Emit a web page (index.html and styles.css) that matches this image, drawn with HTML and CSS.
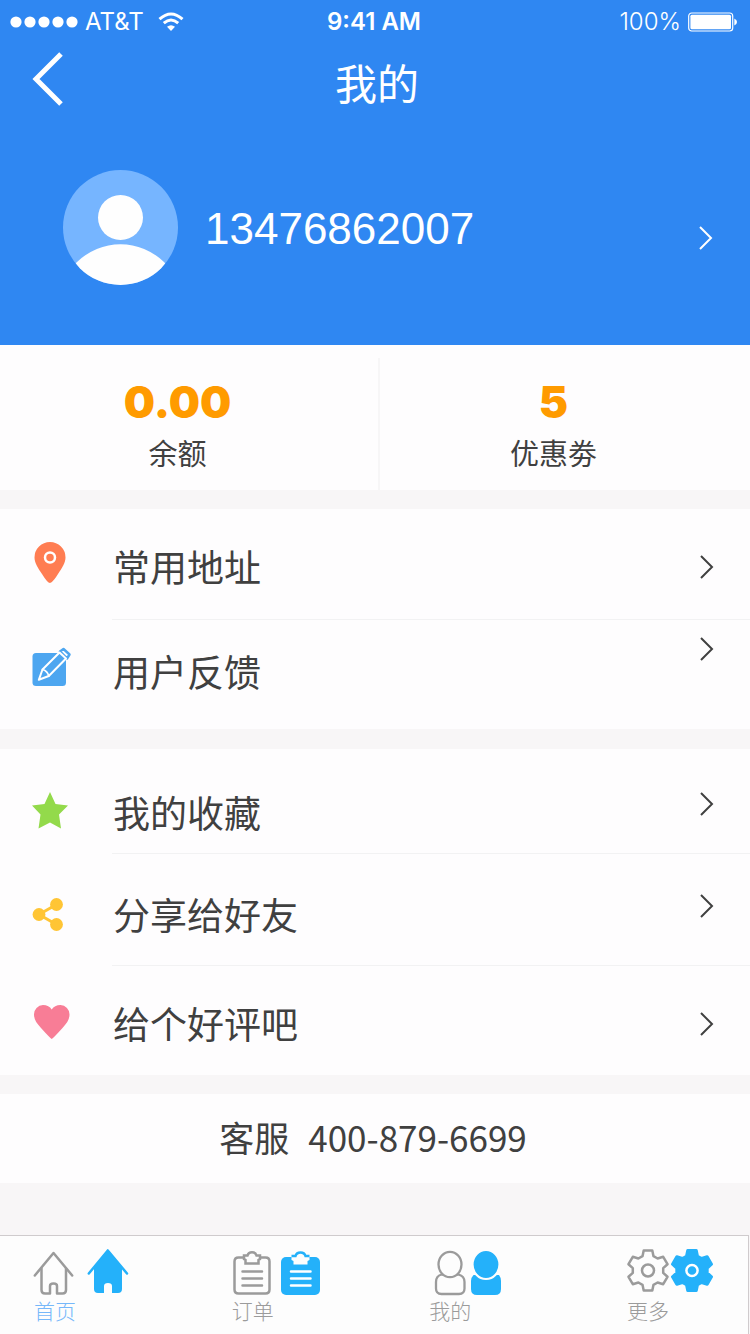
FILE: index.html
```html
<!DOCTYPE html>
<html lang="zh-CN">
<head>
<meta charset="utf-8">
<meta name="viewport" content="width=device-width, initial-scale=1">
<title>我的</title>
<link rel="stylesheet" href="styles.css">
</head>
<body>
<svg class="defs" aria-hidden="true">
  <symbol id="chevron" viewBox="0 0 16 26"><path d="M2 2 13 13 2 24" fill="none" stroke="currentColor" stroke-width="2"/></symbol>
  <symbol id="gear" viewBox="-22 -22 44 44" overflow="visible"><path d="M-4.300-20H4.300L5.500-14.300 9.600-12 15.200-13.700 19.500-6.300 15.200-2.400V2.400L19.500 6.300 15.200 13.700 9.600 12 5.500 14.300 4.300 20H-4.300L-5.500 14.300-9.600 12-15.200 13.700-19.500 6.300-15.200 2.400V-2.400L-19.500-6.300-15.200-13.700-9.600-12-5.500-14.300Z" stroke-linejoin="round"/></symbol>
</svg>
<div class="app">
  <header class="header">
    <div class="status">
      <div class="status__side">
        <svg class="status__dots" width="68" height="12" viewBox="0 0 68 12" fill="#fff"><circle cx="6" cy="6" r="5.6"/><circle cx="20" cy="6" r="5.6"/><circle cx="34" cy="6" r="5.6"/><circle cx="48" cy="6" r="5.6"/><circle cx="62" cy="6" r="5.6"/></svg>
        <span class="status__carrier">AT&amp;T</span>
        <svg class="status__wifi" width="26" height="20" viewBox="0 0 26 20" fill="none" stroke="#fff" stroke-width="3"><path d="M1.5 7.2Q13-3.200 24.500 7.200M5.800 11.200Q13 4.900 20.200 11.200"/><path d="M13 19 9 14.800Q13 11.500 17 14.800Z" fill="#fff" stroke="none"/></svg>
      </div>
      <strong class="status__time">9:41 AM</strong>
      <div class="status__side status__side--end">
        <span>100%</span>
        <svg width="50" height="20" viewBox="0 0 50 20"><rect x=".7" y="1" width="44" height="18" rx="3" fill="none" stroke="#fff" stroke-width="1.200"/><rect x="2.400" y="2.700" width="40.600" height="14.600" rx="1.500" fill="#fff"/><path d="M46.300 6.500Q49 7.500 49 10T46.300 13.500Z" fill="#fff"/></svg>
      </div>
    </div>
    <nav class="nav">
      <button class="nav__back" type="button" aria-label="返回"><svg width="32" height="54" viewBox="0 0 32 54"><path d="M29 2 4 27 29 52" fill="none" stroke="#fff" stroke-width="5"/></svg></button>
      <h1 class="nav__title">我的</h1>
    </nav>
    <a class="profile" href="#profile">
      <svg class="profile__avatar" width="115" height="115" viewBox="0 0 115 115"><clipPath id="disc"><circle cx="57.500" cy="57.500" r="57.500"/></clipPath><g clip-path="url(#disc)"><rect width="115" height="115" fill="#76b5ff"/><circle cx="57.500" cy="136" r="61.800" fill="#fefefe"/></g><circle cx="57.500" cy="47.500" r="22.500" fill="#fefefe"/></svg>
      <span class="profile__phone">13476862007</span>
      <svg class="profile__arrow" width="16" height="26"><use href="#chevron"/></svg>
    </a>
  </header>

  <section class="stats">
    <a class="stat" href="#balance"><strong class="stat__value">0.00</strong><span class="stat__label">余额</span></a>
    <a class="stat" href="#coupons"><strong class="stat__value">5</strong><span class="stat__label">优惠劵</span></a>
  </section>

  <ul class="menu">
    <li><a class="row row--address" href="#address">
      <svg class="row__icon" width="42" height="50" viewBox="0 0 42 50"><path d="M20 41Q17.500 41 12 32C8 26 4.500 21 4.500 15.500A15.500 15.500 0 0 1 35.500 15.500C35.500 21 32 26 28 32 22.500 41 20 41 20 41Z" fill="#ff7d52"/><circle cx="20" cy="15.500" r="5" fill="none" stroke="#fff" stroke-width="2.500"/></svg>
      <span class="row__label">常用地址</span><svg class="row__arrow" width="16" height="26"><use href="#chevron"/></svg></a></li>
    <li><a class="row row--feedback" href="#feedback">
      <svg class="row__icon" width="42" height="50" viewBox="0 0 42 50"><rect x="2.500" y="6" width="33.500" height="33" rx="3.500" fill="#4da6f0"/><g stroke-linejoin="round" stroke-linecap="round"><path d="M30 4.500 33.500 2 39.500 7.500 37 11.500Z" fill="#fff" stroke="#4da6f0" stroke-width="2.500"/><path d="M29.500 5.500 12.500 22.500 8.800 32.800 18.800 29 36 11.500Z" fill="#4da6f0" stroke="#fff" stroke-width="2"/><path d="M12.500 22.500Q17.500 24 18.800 29" fill="none" stroke="#fff" stroke-width="1.800"/></g></svg>
      <span class="row__label">用户反馈</span><svg class="row__arrow row__arrow--top" width="16" height="26"><use href="#chevron"/></svg></a></li>
  </ul>

  <ul class="menu">
    <li><a class="row row--favorites" href="#favorites">
      <svg class="row__icon" width="42" height="50" viewBox="0 0 42 50"><path d="M20 4 25.500 16 38 17.500 29 26.500 31 40.500 20 34.500 8.500 40.500 10.500 26.500 2 17.500 14.500 16Z" fill="#93da4b"/></svg>
      <span class="row__label">我的收藏</span><svg class="row__arrow row__arrow--high" width="16" height="26"><use href="#chevron"/></svg></a></li>
    <li><a class="row row--share" href="#share">
      <svg class="row__icon" width="42" height="50" viewBox="0 0 42 50"><path d="M26.500 14.500 9 24.500 26.500 34.500" fill="none" stroke="#ffc535" stroke-width="3"/><g fill="#ffc535"><circle cx="26.500" cy="14.500" r="6.400"/><circle cx="9" cy="24.500" r="6.400"/><circle cx="26.500" cy="34.500" r="6.400"/></g></svg>
      <span class="row__label">分享给好友</span><svg class="row__arrow row__arrow--high" width="16" height="26"><use href="#chevron"/></svg></a></li>
    <li><a class="row row--rate" href="#rate">
      <svg class="row__icon" width="42" height="50" viewBox="0 0 42 50"><path d="M21.700 40Q20.500 39.500 11 29C6.500 24 4 20.500 4 15.500A9.300 9.300 0 0 1 13 6Q19 6 21.700 10.500 24.500 6 30.500 6A9.300 9.300 0 0 1 39.500 15.500C39.500 20.500 37 24 32.500 29Q23 39.500 21.700 40Z" fill="#f87d96"/></svg>
      <span class="row__label">给个好评吧</span><svg class="row__arrow" width="16" height="26"><use href="#chevron"/></svg></a></li>
  </ul>

  <a class="service" href="tel:4008796699"><span>客服</span><span>400-879-6699</span></a>

  <nav class="tabs">
    <a class="tab tab--active" href="#home">
      <svg width="96" height="49" viewBox="0 0 96 49"><g fill="none" stroke="#9b9b9b" stroke-width="2.500" stroke-linecap="round" stroke-linejoin="round"><path d="M1.800 28.500 20.500 6 39.200 28.500"/><path d="M8.500 21.500V43Q8.500 46.500 12 46.500H17V39Q17 36.500 20.500 36.500T24 39V46.500H29.500Q33 46.500 33 43V21.500"/></g><path d="M74.800 3.500 55.800 26.500M74.800 3.500 94 26.500" fill="none" stroke="#24b1fa" stroke-width="2.500" stroke-linecap="round"/><path d="M74.800 2.500 89 20V42Q89 46 85 46H79V39Q79 36 75 36T71 39V46H65Q61 46 61 42V20Z" fill="#24b1fa"/></svg>
      <span class="tab__label">首页</span></a>
    <a class="tab" href="#orders">
      <svg width="96" height="49" viewBox="0 0 96 49"><g fill="none" stroke="#9b9b9b" stroke-width="2.500"><path d="M12 10.500H7.500Q3.500 10.500 3.500 14.500V42.500Q3.500 46.500 7.500 46.500H34.500Q38.500 46.500 38.500 42.500V14.500Q38.500 10.500 34.500 10.500H30"/><path d="M13 8.500H16.500Q17.500 5.200 21 5.200T25.500 8.500H29V12L27.500 13V16.500H14.500V13L13 12Z"/><path d="M11.500 24.500H31M11.500 31.500H31M11.500 38.500H31" stroke-linecap="round"/></g><rect x="50" y="10" width="39" height="38" rx="5" fill="#24b1fa"/><path d="M60.500 9H64.500Q65.500 5.500 69.500 5.500T74.500 9H78.500V13L76.500 14V17.500H62.500V14L60.500 13Z" fill="#fdfdfd"/><path d="M60.500 9H64.500Q65.500 5.500 69.500 5.500T74.500 9H78.500" fill="none" stroke="#24b1fa" stroke-width="2.500"/><path d="M60 24.500H79.500M60 31.500H79.500M60 38.500H79.500" stroke="#fff" stroke-width="2.500" stroke-linecap="round"/></svg>
      <span class="tab__label">订单</span></a>
    <a class="tab" href="#mine">
      <svg width="96" height="49" viewBox="0 0 96 49"><g stroke="#9b9b9b" stroke-width="2.300" fill="#fdfdfd"><path d="M13.500 27.500H30.500Q36.500 29 36.500 35V41.500Q36.500 47 31 47H13.500Q8 47 8 41.500V35Q8 29 13.500 27.500Z"/><ellipse cx="22" cy="17.500" rx="11.500" ry="12.700"/></g><path d="M45.500 28H71Q73 30.500 73 34V42Q73 48 67 48H49Q43 48 43 42V34Q43 30.500 45.500 28Z" fill="#24b1fa"/><ellipse cx="58" cy="17.500" rx="13.500" ry="14.500" fill="#24b1fa" stroke="#fdfdfd" stroke-width="2.200"/></svg>
      <span class="tab__label">我的</span></a>
    <a class="tab" href="#more">
      <svg width="96" height="49" viewBox="0 0 96 49"><g fill="none" stroke="#9b9b9b" stroke-width="2.500"><use href="#gear" x="0" y="1.500" width="44" height="44"/><circle cx="22" cy="23.500" r="6"/></g><g fill="#24b1fa" stroke="#24b1fa" stroke-width="3"><use href="#gear" x="44" y="1.500" width="44" height="44"/></g><circle cx="66" cy="23.500" r="5.600" fill="none" stroke="#fff" stroke-width="2.500"/></svg>
      <span class="tab__label">更多</span></a>
  </nav>
</div>
</body>
</html>
```
FILE: styles.css
```css
* { box-sizing: border-box; }

body {
  margin: 0;
  background: #f8f6f7;
  color: #404040;
  font-family: "Liberation Sans", "Noto Sans CJK SC", sans-serif;
}

a { color: inherit; text-decoration: none; }

.defs { display: block; width: 0; height: 0; }

.app {
  display: flex;
  flex-direction: column;
  min-height: 100vh;
}

.header {
  background: #2f87f2;
  color: #fff;
  padding-bottom: 60px;
}

.status {
  display: grid;
  grid-template-columns: 1fr auto 1fr;
  align-items: center;
  height: 43px;
  padding: 0 12px 0 10px;
  font: 300 24px/28px Inter, sans-serif;
}

.status__side { display: flex; align-items: center; gap: 7px; }
.status__side--end { justify-content: flex-end; }
.status__carrier { font-weight: 400; }
.status__wifi { margin-left: 7px; }
.status__time { font-weight: 600; }

.nav {
  display: grid;
  grid-template-columns: 32px 1fr 28px;
  align-items: center;
  height: 80px;
  padding: 0 32px;
}

.nav__back {
  display: flex;
  padding: 0 0 8px;
  border: 0;
  background: none;
}

.nav__title {
  margin: 0;
  padding-bottom: 3px;
  text-align: center;
  font: 400 42px/60px "Noto Sans CJK SC", sans-serif;
}

.profile {
  display: flex;
  align-items: center;
  gap: 27px;
  padding: 47px 36px 0 63px;
}

.profile__phone { flex: 1; padding-top: 2px; font-size: 44px; line-height: 52px; }
.profile__arrow { margin-top: 20px; }

.stats {
  display: grid;
  grid-template-columns: 378fr 372fr;
  padding-top: 13px;
  background: #fefdfe;
}

.stat {
  display: flex;
  flex-direction: column;
  align-items: center;
  gap: 6px;
  padding: 20px 23px 18px 0;
}

.stat + .stat { border-left: 2px solid #f7f6f7; }

.stat__value {
  color: #ff9b00;
  font: 900 44px/48px Inter, sans-serif;
}

.stat__label { font: 29px/40px "Noto Sans CJK SC", sans-serif; }

.menu {
  margin: 19px 0 0;
  padding: 0;
  list-style: none;
  background: #fefdfe;
}

.menu + .menu { margin-top: 20px; }

.menu li:not(:last-child)::after {
  content: "";
  display: block;
  height: 1px;
  margin-left: 112px;
  background: #f2f2f3;
}

.row {
  display: grid;
  grid-template-columns: 42px 1fr 16px;
  column-gap: 40px;
  align-items: center;
  height: 110px;
  padding: 0 35px 0 30px;
  font: 37px/50px "Noto Sans CJK SC", sans-serif;
}

.row__label { padding: 0 0 2px 1px; }

.row--address { padding-top: 6px; }
.row--feedback { height: 109px; padding-bottom: 5px; }
.row--favorites { height: 104px; padding-top: 23px; }
.row--share { height: 111px; padding-top: 10px; }
.row--rate { height: 109px; padding-top: 7px; }

.row__arrow--top { align-self: start; margin-top: 16px; }
.row__arrow--high { margin-bottom: 17px; }

.service {
  display: flex;
  justify-content: center;
  gap: 19px;
  margin-top: 19px;
  padding: 19px 4px 22px 0;
  background: #fefdfe;
  font: 35px/48px "Noto Sans CJK SC", sans-serif;
}

.tabs {
  display: flex;
  justify-content: space-between;
  margin: auto 1px 0 0;
  padding: 11px 26px 10px 33px;
  border: solid #cfcbcd;
  border-width: 1px 1px 0 0;
  background: #fdfdfd;
  color: #9b9b9b;
}

.tab { width: 96px; }
.tab svg { display: block; }
.tab--active { color: #76b8fa; }

.tab__label {
  display: block;
  width: 44px;
  text-align: center;
  font: 300 21px/28px "Noto Sans CJK SC", sans-serif;
}
```
